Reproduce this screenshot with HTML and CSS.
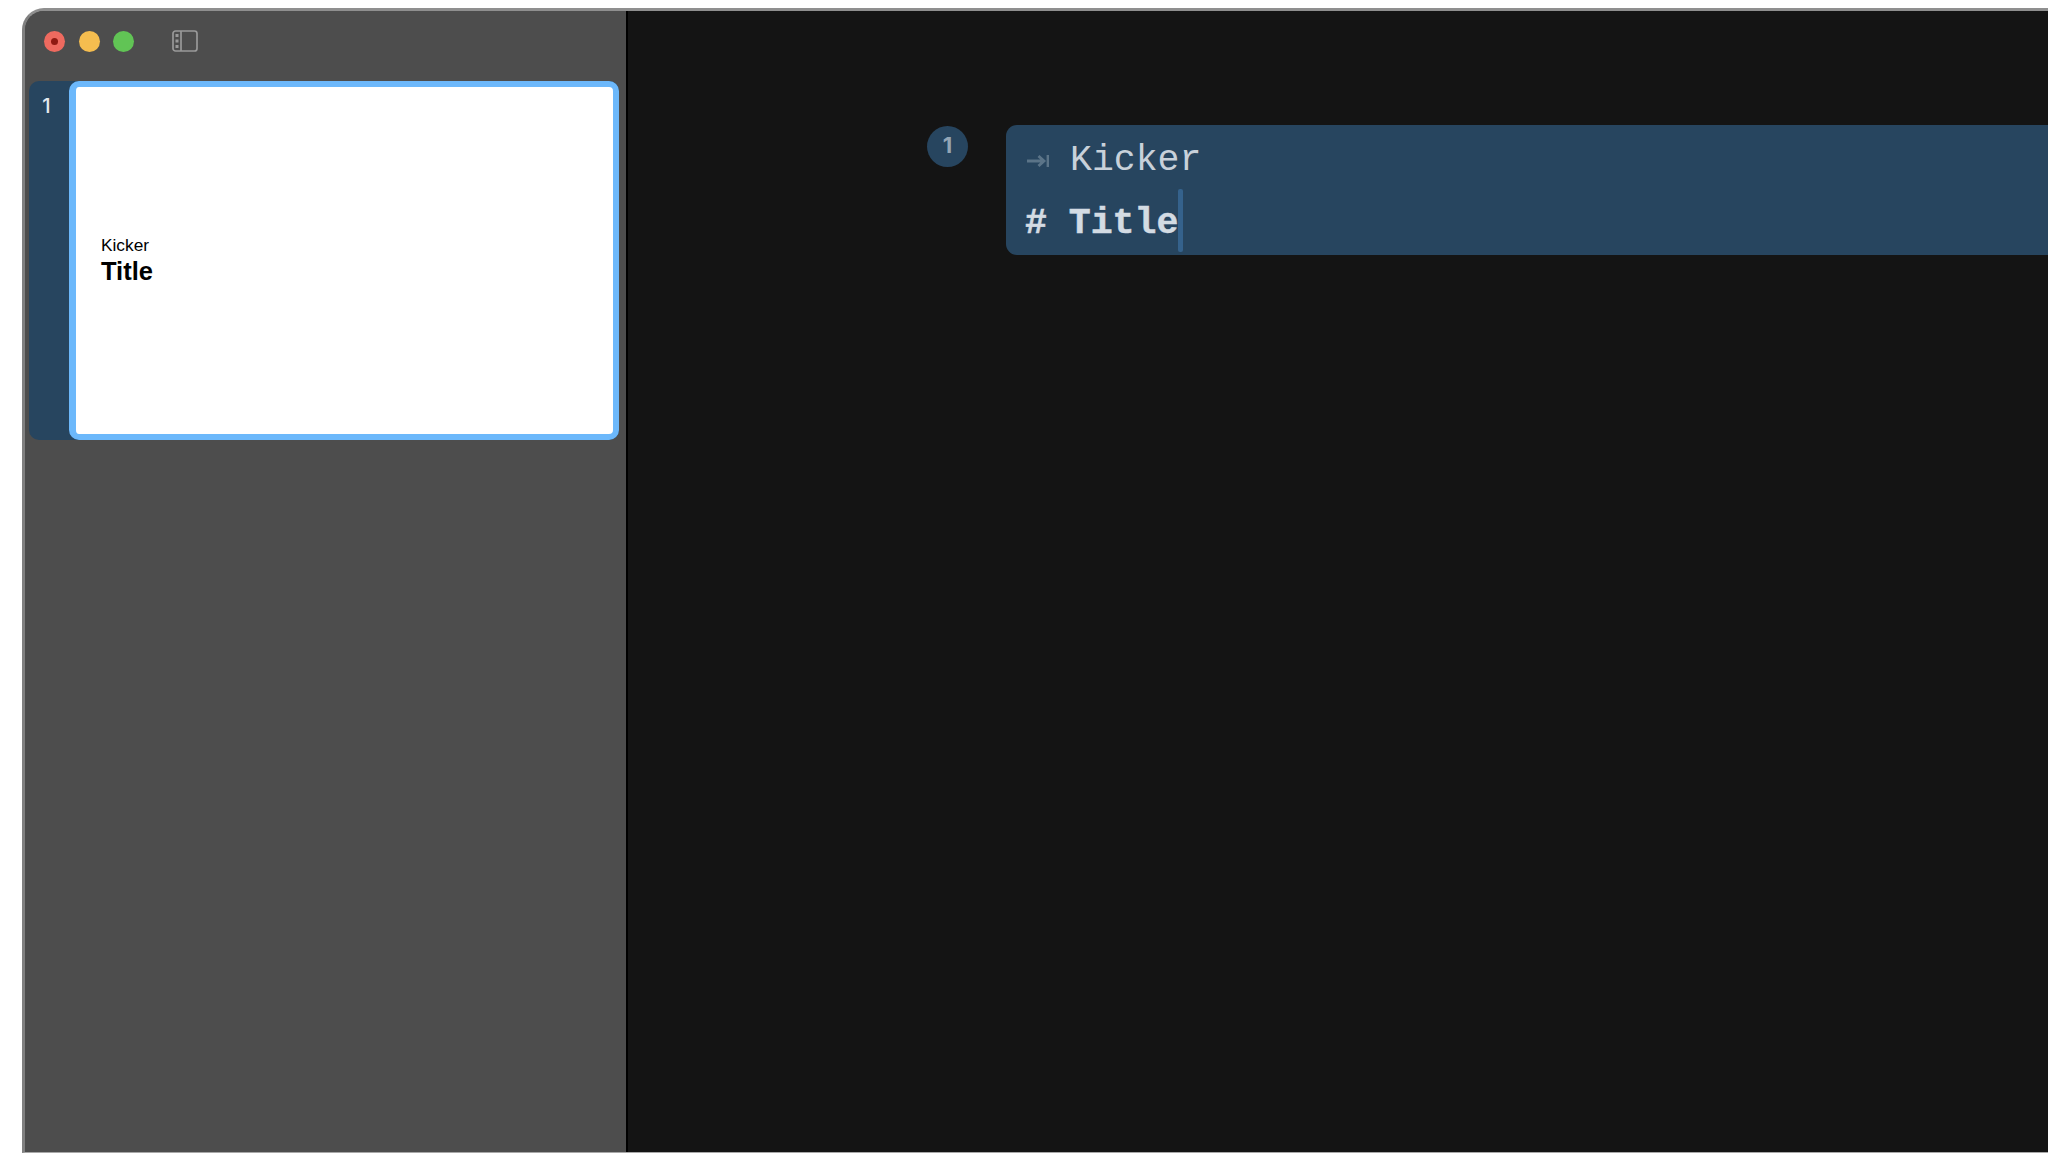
FILE: index.html
```html
<!DOCTYPE html>
<html lang="en">
<head>
  <meta charset="UTF-8" />
  <meta name="viewport" content="width=device-width, initial-scale=1.0" />
  <title>Slides</title>
  <link rel="stylesheet" href="styles.css">
</head>
<body>
  <div class="window">
    <aside class="sidebar">
      <div class="titlebar">
        <span class="light red"><i></i></span>
        <span class="light yellow"></span>
        <span class="light green"></span>
        <svg class="toggle" width="26" height="22" viewBox="0 0 26 22" fill="none">
          <rect x="1" y="1" width="24" height="20" rx="2.5" stroke="#999" stroke-width="1.7"/>
          <path d="M9 1v20" stroke="#999" stroke-width="1.7"/>
          <rect x="3.5" y="4" width="3" height="3" fill="#999"/>
          <rect x="3.5" y="9.5" width="3" height="3" fill="#999"/>
          <rect x="3.5" y="15" width="3" height="3" fill="#999"/>
        </svg>
      </div>
      <div class="slide-row">
        <div class="slide-num">1</div>
        <div class="thumb">
          <div class="thumb-kicker">Kicker</div>
          <div class="thumb-title">Title</div>
        </div>
      </div>
    </aside>
    <main class="editor">
      <div class="badge">1</div>
      <div class="block">
        <div class="line kicker">
          <svg class="tab" width="22" height="12" viewBox="0 0 22 12" fill="none">
            <path d="M0 6h16M11.5 1l5.5 5-5.5 5M21 0v12" stroke="#5b7488" stroke-width="2.8"/>
          </svg>
          <span>Kicker</span>
        </div>
        <div class="line title"># Title<span class="caret"></span></div>
      </div>
    </main>
  </div>
</body>
</html>
```

FILE: styles.css
```css
html, body {
  height: 100%;
}

body {
  margin: 0;
  background: #fff;
  overflow: hidden;
  padding: 8px 0 0 22px;
  box-sizing: border-box;
}

.window {
  display: flex;
  height: 1145px;
  box-sizing: border-box;
  border-top: 3px solid #8f8f8f;
  border-left: 3px solid #808080;
  border-bottom: 1px solid #a8a8a8;
  border-top-left-radius: 22px;
  overflow: hidden;
  background: #4d4d4d;
}

.sidebar {
  width: 601px;
  flex-shrink: 0;
  background: #4d4d4d;
  border-right: 2px solid #000;
}

.titlebar {
  display: flex;
  align-items: center;
  height: 60px;
  margin-bottom: 10px;
  padding-left: 19px;
  gap: 13.5px;
}

.light {
  width: 21px;
  height: 21px;
  border-radius: 50%;
  display: flex;
  align-items: center;
  justify-content: center;
}

.light i {
  width: 7px;
  height: 7px;
  border-radius: 50%;
  background: #8f1a12;
}

.red { background: #ee6a5f; }
.yellow { background: #f5bd4f; }
.green { background: #61c455; }

.toggle {
  margin-left: 24px;
}

.slide-row {
  display: flex;
  margin-left: 4px;
  width: 590px;
  height: 359px;
  background: #27455f;
  border-radius: 10px;
}

.slide-num {
  width: 35px;
  padding: 12px 5px 0 0;
  text-align: center;
  color: #e4e9ee;
  font: 500 20px/26px Inter, sans-serif;
}

.thumb {
  flex: 1;
  box-sizing: border-box;
  border: 6px solid #6cb8fb;
  border-left-width: 7px;
  border-radius: 10px;
  background: #fff;
  display: flex;
  flex-direction: column;
  justify-content: center;
  padding: 2px 0 0 25px;
  color: #000;
  font-family: "Liberation Sans", Arial, sans-serif;
}

.thumb-kicker {
  font-size: 17.3px;
  line-height: 20px;
}

.thumb-title {
  font-size: 25.5px;
  line-height: 33px;
  font-weight: 700;
}

.editor {
  flex: 1;
  display: flex;
  align-items: flex-start;
  background: #141414;
  padding: 114px 0 0 299px;
}

.badge {
  width: 41px;
  height: 41px;
  margin-top: 1px;
  border-radius: 50%;
  background: #27455f;
  color: #93a5b5;
  font: 700 22px/38px Inter, sans-serif;
  text-align: center;
}

.block {
  flex: 1;
  margin-left: 38px;
  height: 130px;
  background: #27455f;
  border-radius: 11px 0 0 11px;
  padding-left: 19px;
  box-sizing: border-box;
  color: #d3dbe3;
  font-family: "Liberation Mono", monospace;
  font-size: 36.5px;
}

.line {
  display: flex;
  align-items: center;
  white-space: pre;
}

.kicker {
  height: 66px;
  padding-top: 5px;
  box-sizing: border-box;
  color: #c8d1da;
}

.tab {
  margin: 1px 21px 0 2px;
}

.title {
  height: 60px;
  padding-top: 4px;
  box-sizing: border-box;
  font-weight: 700;
  -webkit-text-stroke: 0.5px #d3dbe3;
}

.caret {
  width: 5px;
  height: 63px;
  margin-top: -6px;
  border-radius: 2px;
  background: #35628c;
  align-self: flex-start;
}
```
